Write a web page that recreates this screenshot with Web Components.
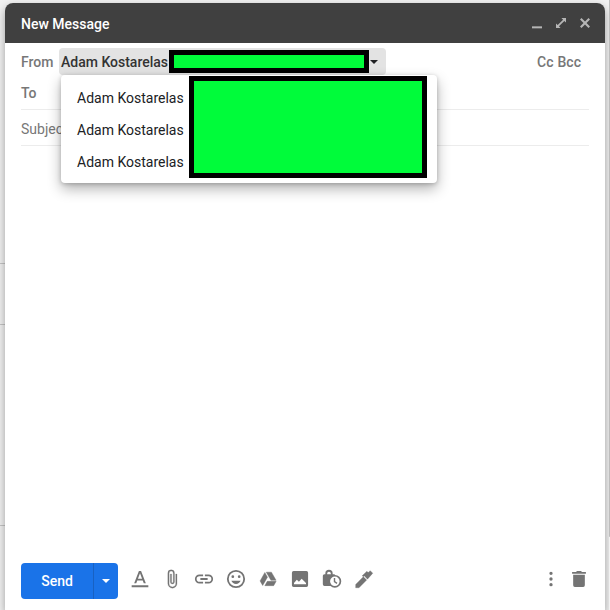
<!DOCTYPE html>
<html lang="en">
<head>
<meta charset="utf-8">
<title>New Message</title>
<style>
html, body { height: 100%; }
body { margin: 0; overflow: hidden; background: #f2f2f2; font-family: Roboto, "Liberation Sans", sans-serif; font-size: 14px; line-height: 20px; color: #202124; }
</style>
</head>
<body>
<mail-page>
  <compose-window>
    <compose-header slot="header">New Message</compose-header>
    <from-row slot="fields">Adam Kostarelas</from-row>
    <field-row slot="fields" label="To" kind="to"></field-row>
    <field-row slot="fields" label="Subject" kind="subject"></field-row>
    <compose-toolbar slot="footer"></compose-toolbar>
  </compose-window>
</mail-page>
<script>
const define = (name, html, setup) => customElements.define(name, class extends HTMLElement {
  constructor() {
    super();
    this.attachShadow({ mode: "open" }).innerHTML = html;
  }
  connectedCallback() { if (setup) setup(this, this.shadowRoot); }
});

define("redacted-block", `<style>
:host { display: block; box-sizing: border-box; background: #00fc3a; border: 5px solid #000; }
</style>`);

define("tool-icon", `<style>
:host { display: inline-flex; }
button { border: 0; padding: 0; margin: 0; background: none; color: inherit; display: flex; }
svg { width: 20px; height: 20px; fill: currentColor; display: block; }
</style><button type="button"><svg viewBox="0 0 24 24" aria-hidden="true"></svg></button>`, (el, root) => {
  const icons = {
    "Formatting options": '<path d="M2 19.400h20v2.400H2zM5 17h2.500l1.200-3.200h6.600l1.200 3.200H19L13.300 2.500h-2.600zM9.500 11.600 12 5.200l2.500 6.400z"/>',
    "Attach files": '<path d="M16.500 6v11.500a4 4 0 0 1-8 0V5a2.500 2.500 0 0 1 5 0v10.500a1 1 0 0 1-2 0V6H10v9.500a2.500 2.500 0 0 0 5 0V5a4 4 0 0 0-8 0v12.500a5.500 5.500 0 0 0 11 0V6z" stroke="currentColor" stroke-width=".3"/>',
    "Insert link": '<path d="M3.900 12A3.100 3.100 0 0 1 7 8.900h4V7H7a5 5 0 0 0 0 10h4v-1.900H7A3.100 3.100 0 0 1 3.900 12zM8 13h8v-2H8zm9-6h-4v1.900h4a3.100 3.100 0 0 1 0 6.200h-4V17h4a5 5 0 0 0 0-10z"/>',
    "Insert emoji": '<path d="M12 2a10 10 0 1 0 0 20 10 10 0 0 0 0-20zm0 18a8 8 0 1 1 0-16 8 8 0 0 1 0 16zm3.500-9a1.500 1.500 0 1 0 0-3 1.500 1.500 0 0 0 0 3zm-7 0a1.500 1.500 0 1 0 0-3 1.500 1.500 0 0 0 0 3zm3.500 6.500c2.330 0 4.310-1.460 5.110-3.500H6.890c.8 2.040 2.780 3.500 5.110 3.500z"/>',
    "Insert from Drive": '<path d="M8.200 4.200 2.500 14.300 5.600 19.800 11.400 9.800zM11.100 14.800 8.200 20h10.600l3-5.200zM21.700 13.500 16.100 3.800H9.900l5.600 9.700z" stroke="currentColor" stroke-width=".5" stroke-linejoin="round"/>',
    "Insert photo": '<path fill-rule="evenodd" d="M19.700 2.400H4.300a2 2 0 0 0-2 2v15.200c0 1.100.9 2 2 2h15.400a2 2 0 0 0 2-2V4.400a2 2 0 0 0-2-2zM4.800 18.200v-1.500l3.400-3.800 2.500 2.500 3.300-3.700 5.200 5v1.500z"/>',
    "Confidential mode": '<path fill-rule="evenodd" d="M3 20.400a2 2 0 0 1-2-2V8.200a2 2 0 0 1 2-2h1V5.400a4.400 4.400 0 0 1 8.800 0v.8H14c1 0 1.800.6 2 1.500v12.700zM6.200 6.200h4.400v-.8a2.200 2.200 0 0 0-4.400 0z"/><circle cx="15.400" cy="14.800" r="6.700" fill="#fff" stroke="currentColor" stroke-width="2"/><path d="M15 10.800v4.400l3 2" fill="none" stroke="currentColor" stroke-width="1.700"/>',
    "Insert signature": '<path d="m2 18.500 9.200-9.200 4 4L6 22.500H2zM9.800 8.200l5.700-5.400 1.500 1.500L19.500 2 22.500 5l-6.300 7.200-3.900-4L15 5.500l-3.700 3.700z" stroke="currentColor" stroke-width=".4"/>',
    "More options": '<path d="M12 7.200a2 2 0 1 0 0-4 2 2 0 0 0 0 4zm0 2.800a2 2 0 1 0 0 4 2 2 0 0 0 0-4zm0 6.800a2 2 0 1 0 0 4 2 2 0 0 0 0-4z"/>',
    "Discard draft": '<path d="M5 7h14v12.500a2 2 0 0 1-2 2H7a2 2 0 0 1-2-2zM3.700 3.500h4.800l1-1h5l1 1h4.800v2.300H3.700z"/>',
    "Minimize": '<path d="M6 16h12v2.400H6z"/>',
    "Full screen": '<path d="M12.500 6H18v5.500l-2-2-6.500 6.500 2 2H6v-5.500l2 2L14.500 8z"/>',
    "Close": '<path d="m7.800 6 4.200 4.200L16.200 6 18 7.800 13.800 12l4.200 4.200-1.800 1.800-4.200-4.200L7.800 18 6 16.200l4.200-4.200L6 7.800z"/>'
  };
  const name = el.getAttribute("name");
  const svg = root.querySelector("svg");
  root.querySelector("button").setAttribute("aria-label", name);
  svg.innerHTML = icons[name];
  if (name === "Insert link" || name === "Insert emoji") svg.setAttribute("viewBox", "1 1 22 22");
});

define("mail-page", `<style>
:host { display: grid; grid-template-columns: minmax(0, 1fr) 1px; height: 100vh; box-sizing: border-box; position: relative; }
main { padding: 3px 4px 0 5px; display: flex; min-height: 0; position: relative; overflow: hidden; }
.rows { position: absolute; inset: 0 auto 0 0; width: 5px; display: grid; grid-template-rows: 263px 60px 200px 1fr; row-gap: 1px; background: #c6c6c6; }
.rows i { background: #f2f2f2; }
.bar { background: linear-gradient(#bdbdbd, #bdbdbd) 0 0 / 100% 88% no-repeat; }
slot { display: contents; }
</style><main><div class="rows"><i></i><i></i><i></i><i></i></div><slot></slot></main><div class="bar"></div>`);

define("compose-window", `<style>
:host { flex: 1; display: flex; flex-direction: column; min-width: 0; position: relative; background: #fff; border-radius: 8px 8px 0 0; box-shadow: 0 4px 10px rgba(0,0,0,.36); }
.fields { padding: 0 16px; }
textarea { flex: 1; border: 0; resize: none; outline: 0; padding: 8px 16px; font: inherit; background: none; min-height: 0; }
</style><slot name="header"></slot><div class="fields"><slot name="fields"></slot></div>
<textarea aria-label="Message body"></textarea><slot name="footer"></slot>`);

define("compose-header", `<style>
:host { display: flex; align-items: center; height: 40px; padding: 0 10px 0 16px; background: #404040; color: #fff; border-radius: 8px 8px 0 0; font-weight: 500; }
h1 { flex: 1; margin: 0; font: inherit; padding-top: 2px; }
div { display: flex; gap: 4px; color: #b5b5b5; }
</style><h1><slot></slot></h1><div><tool-icon name="Minimize"></tool-icon><tool-icon name="Full screen"></tool-icon><tool-icon name="Close"></tool-icon></div>`);

define("sender-menu", `<style>
:host { position: absolute; left: 2px; top: 100%; z-index: 2; display: flex; width: 376px; box-sizing: border-box; padding: 1px 10px 5px 0; background: #fff; border-radius: 4px; box-shadow: 0 6px 14px rgba(0,0,0,.3), 0 1px 4px rgba(0,0,0,.2); font-weight: 400; }
.names { display: flex; flex-direction: column; padding-top: 6px; width: 128px; }
button { border: 0; background: none; margin: 0; height: 32px; padding: 0 0 0 16px; text-align: left; font: inherit; color: #202124; white-space: nowrap; }
redacted-block { flex: 1; }
</style><div class="names" role="menu"><button role="menuitem">Adam Kostarelas</button><button role="menuitem">Adam Kostarelas</button><button role="menuitem">Adam Kostarelas</button></div><redacted-block></redacted-block>`);

define("from-row", `<style>
:host { display: flex; align-items: center; padding-top: 5px; font-weight: 500; color: #777; }
.label { width: 38px; }
.pick { position: relative; }
.chip { display: flex; align-items: center; height: 27px; width: 327px; box-sizing: border-box; border: 0; margin: 0; padding: 0 8px 0 2px; background: #e3e3e3; border-radius: 4px; font: inherit; color: #333; text-align: left; white-space: nowrap; }
.name { width: 108px; }
redacted-block { flex: 1; height: 23px; }
.arrow { margin-left: 1px; border: 4px solid transparent; border-top-color: #202124; border-bottom: 0; }
.copy { margin-left: auto; padding-right: 8px; display: flex; gap: 4px; }
.copy button { border: 0; background: none; padding: 0; font: inherit; color: #777; }
</style><span class="label" id="from">From</span>
<div class="pick"><button class="chip" type="button" aria-haspopup="menu" aria-expanded="true" aria-labelledby="from name"><span class="name" id="name"><slot></slot></span><redacted-block></redacted-block><span class="arrow"></span></button><sender-menu></sender-menu></div>
<div class="copy"><button type="button">Cc</button><button type="button">Bcc</button></div>`);

define("field-row", `<style>
:host { display: flex; align-items: center; height: 35px; box-sizing: border-box; padding-top: 2px; border-bottom: 1px solid #ececec; color: #777; }
:host([kind="subject"]) { height: 36px; }
:host([kind="to"]) { font-weight: 500; }
label { white-space: nowrap; }
input { flex: 1; min-width: 0; border: 0; outline: 0; padding: 0; font: inherit; background: none; }
input::placeholder { color: #777; opacity: 1; }
</style><label for="field"></label><input id="field">`, (el, root) => {
  const label = el.getAttribute("label");
  const input = root.querySelector("input");
  if (el.getAttribute("kind") === "subject") {
    input.placeholder = label;
    input.setAttribute("aria-label", label);
    root.querySelector("label").remove();
  } else {
    root.querySelector("label").textContent = label;
  }
});

define("compose-toolbar", `<style>
:host { display: flex; align-items: center; padding: 0 16px 11px; color: #747474; }
.send { display: flex; height: 36px; border-radius: 4px; overflow: hidden; margin-right: 12px; }
.send button { border: 0; margin: 0; padding: 0; color: #fff; background: #1a73e8; font: 500 14px/20px Roboto, "Liberation Sans", sans-serif; }
.main { width: 72px; }
.more { width: 25px; display: flex; align-items: center; justify-content: center; }
.send .more { border-left: 1px solid #1861c2; }
.more span { border: 4px solid transparent; border-top-color: #fff; border-bottom: 0; }
.tools, .end { display: flex; gap: 12px; padding-bottom: 4px; }
.end { margin-left: auto; gap: 8px; }
</style><div class="send"><button class="main" type="button">Send</button><button class="more" type="button" aria-label="More send options"><span></span></button></div>
<div class="tools"><tool-icon name="Formatting options"></tool-icon><tool-icon name="Attach files"></tool-icon><tool-icon name="Insert link"></tool-icon><tool-icon name="Insert emoji"></tool-icon><tool-icon name="Insert from Drive"></tool-icon><tool-icon name="Insert photo"></tool-icon><tool-icon name="Confidential mode"></tool-icon><tool-icon name="Insert signature"></tool-icon></div>
<div class="end"><tool-icon name="More options"></tool-icon><tool-icon name="Discard draft"></tool-icon></div>`);
</script>
</body>
</html>
